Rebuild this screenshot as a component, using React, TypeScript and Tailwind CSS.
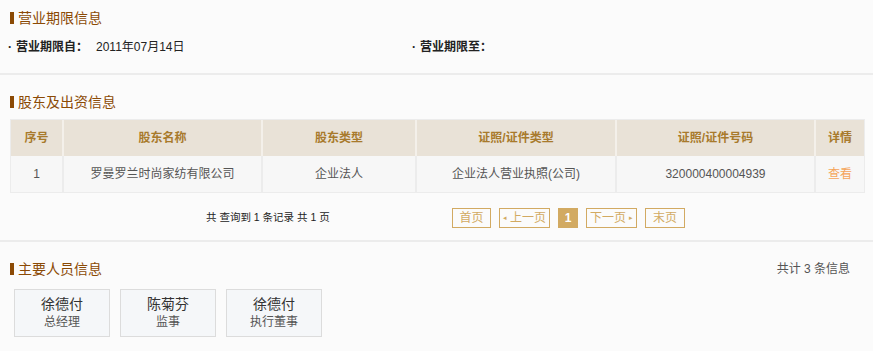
const font = '[font-family:"Liberation_Sans","Noto_Sans_CJK_SC",sans-serif]'

function SectionTitle({ children }: { children: React.ReactNode }) {
  return (
    <div className="flex h-[18px] items-center">
      <span className="ml-[10px] h-[12px] w-[4px] bg-[#8b4a05]" />
      <span className="ml-[4px] text-[14px] leading-[18px] text-[#8b4a05]">{children}</span>
    </div>
  )
}

const columns = [
  { title: '序号', width: 'w-[51px]' },
  { title: '股东名称', width: 'w-[199px]' },
  { title: '股东类型', width: 'w-[154px]' },
  { title: '证照/证件类型', width: 'w-[200px]' },
  { title: '证照/证件号码', width: 'w-[199px]' },
  { title: '详情', width: 'flex-1' },
]

const row = ['1', '罗曼罗兰时尚家纺有限公司', '企业法人', '企业法人营业执照(公司)', '320000400004939']

const people = [
  { name: '徐德付', role: '总经理' },
  { name: '陈菊芬', role: '监事' },
  { name: '徐德付', role: '执行董事' },
]

function PageButton({ children, width }: { children: React.ReactNode; width: string }) {
  return (
    <span
      className={`flex h-[20px] ${width} items-center justify-center border border-[#d2aa62] text-[12px] text-[#d2aa62]`}
    >
      {children}
    </span>
  )
}

export default function App() {
  return (
    <div className={`h-[351px] w-[873px] overflow-hidden bg-[#fbfbfb] ${font}`}>
      <div className="border-b-2 border-[#ececec] pt-[9px] pb-[17px]">
        <SectionTitle>营业期限信息</SectionTitle>
        <div className="mt-[11px] flex h-[18px] items-center text-[12px] text-[#222]">
          <div className="flex w-[412px] items-center">
            <span className="ml-[8px] font-bold">·</span>
            <span className="ml-[4px] font-bold">营业期限自：</span>
            <span className="ml-[8px]">2011年07月14日</span>
          </div>
          <div className="flex items-center">
            <span className="font-bold">·</span>
            <span className="ml-[4px] font-bold">营业期限至：</span>
          </div>
        </div>
      </div>

      <div className="border-b-2 border-[#ececec] pt-[18px] pb-[12px]">
        <SectionTitle>股东及出资信息</SectionTitle>
        <div className="mx-[10px] mt-[8px] w-[855px] border border-[#ececec]">
          <div className="flex h-[36px] bg-[#e9e2d7]">
            {columns.map((c, i) => (
              <div
                key={c.title}
                className={`${c.width} flex items-center justify-center text-[12px] font-bold text-[#a87a2c] ${i > 0 ? 'border-l-2 border-[#f4f0ea]' : ''}`}
              >
                {c.title}
              </div>
            ))}
          </div>
          <div className="flex h-[36px] bg-[#f7f7f7]">
            {columns.map((c, i) => (
              <div
                key={c.title}
                className={`${c.width} flex items-center justify-center text-[12px] text-[#555] ${i > 0 ? 'border-l-2 border-[#ececec]' : ''}`}
              >
                {i < row.length ? row[i] : <span className="text-[#f5a55a]">查看</span>}
              </div>
            ))}
          </div>
        </div>
        <div className="mt-[15px] flex h-[20px] items-center">
          <span className="ml-[206px] w-[246px] text-[10.5px] text-[#222]">共 查询到 1 条记录 共 1 页</span>
          <div className="flex gap-[8px]">
            <PageButton width="w-[39px]">首页</PageButton>
            <PageButton width="w-[51px]">
              <span className="mr-[3px] text-[7px]">◂</span>上一页
            </PageButton>
            <span className="flex h-[20px] w-[20px] items-center justify-center bg-[#d2aa62] text-[12px] font-bold text-white">
              1
            </span>
            <PageButton width="w-[51px]">
              下一页<span className="ml-[3px] text-[7px]">▸</span>
            </PageButton>
            <PageButton width="w-[40px]">末页</PageButton>
          </div>
        </div>
      </div>

      <div className="pt-[18px]">
        <div className="flex items-center justify-between">
          <SectionTitle>主要人员信息</SectionTitle>
          <span className="mr-[23px] text-[12px] text-[#555]">共计 3 条信息</span>
        </div>
        <div className="mt-[11px] ml-[14px] flex gap-[10px]">
          {people.map((p, i) => (
            <div
              key={i}
              className="flex h-[48px] w-[96px] flex-col items-center justify-center border border-[#dcdcdc] bg-[#f5f7f9]"
            >
              <span className="text-[14px] leading-[18px] text-[#333]">{p.name}</span>
              <span className="text-[12px] leading-[18px] text-[#555]">{p.role}</span>
            </div>
          ))}
        </div>
      </div>
    </div>
  )
}
